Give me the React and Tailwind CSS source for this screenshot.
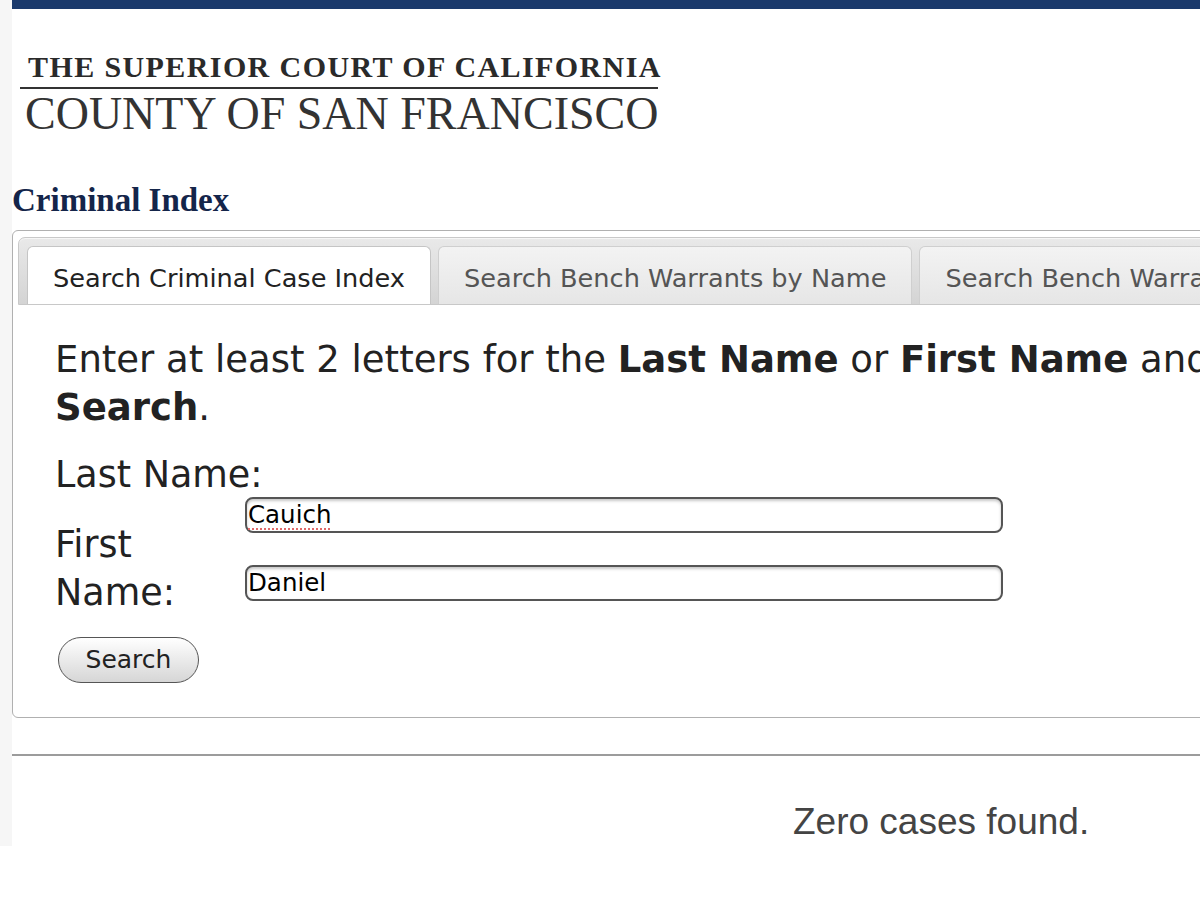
import React from 'react';

// Search tabs across the top of the criminal index panel.
const TABS = [
  { label: 'Search Criminal Case Index', active: true },
  { label: 'Search Bench Warrants by Name', active: false },
  { label: 'Search Bench Warrants by Case Number', active: false },
];

function Tab({ label, active }) {
  return (
    <div
      className={`h-[58px] flex items-center pt-[5px] px-[25px] border border-b-0 rounded-t-[6px] whitespace-nowrap text-[25.6px] shrink-0 ${
        active
          ? 'bg-white border-[#c5c5c5] text-[#222]'
          : 'bg-gradient-to-b from-[#f3f3f3] to-[#e6e6e6] border-[#cfcfcf] text-[#555]'
      }`}
    >
      {label}
    </div>
  );
}

function TextField({ value, misspelled }) {
  return (
    <div className="relative">
      <input
        readOnly
        value={value}
        className="w-[758px] h-[36px] border-2 border-[#555] rounded-[8px] px-[1px] text-[24.5px] text-black bg-white shadow-[inset_0_2px_3px_rgba(0,0,0,0.22)] outline-none font-['DejaVu_Sans',sans-serif]"
      />
      {misspelled && (
        <span className="absolute left-[3px] bottom-[3px] w-[82px] border-b-2 border-dotted border-[#e06a6a] pointer-events-none" />
      )}
    </div>
  );
}

export default function App() {
  return (
    <div className="w-[1200px] h-[906px] overflow-hidden bg-white font-['DejaVu_Sans',sans-serif]">
      <div className="h-[846px] flex">
        <div className="w-[12px] shrink-0 bg-[#f6f6f6]" />
        <div className="w-[1400px] shrink-0 bg-white">
          {/* Top bar */}
          <div className="h-[9px] bg-[#1b3a6c]" />

          {/* Court logo */}
          <div className="ml-[8px] mt-[43px] w-[638px] font-['Liberation_Serif',serif] text-[#2a2a2a]">
            <div className="pl-[8px] text-[30px] leading-none font-bold tracking-[1.4px] whitespace-nowrap">
              THE SUPERIOR COURT OF CALIFORNIA
            </div>
            <div className="mt-[5px] h-[2px] bg-[#333]" />
            <div className="mt-[2px] pl-[5px] text-[46px] leading-none whitespace-nowrap text-[#333]">
              COUNTY OF SAN FRANCISCO
            </div>
          </div>

          {/* Heading */}
          <h1 className="mt-[47px] text-[33px] leading-none font-bold text-[#14254a] font-['Liberation_Serif',serif]">
            Criminal Index
          </h1>

          {/* Search panel */}
          <div className="mt-[13px] border border-[#b0b0b0] rounded-[6px] pt-[6px] px-[5px] pb-[34px]">
            <div className="flex gap-[7px] pl-[8px] pt-[8px] border border-[#c8c8c8] rounded-t-[7px] bg-gradient-to-b from-[#e9e9e9] to-[#d4d4d4] shadow-[inset_0_1px_0_#f6f6f6]">
              {TABS.map(t => (
                <Tab key={t.label} label={t.label} active={t.active} />
              ))}
            </div>

            <div className="pl-[37px] pt-[31px] text-[#222]">
              <p className="w-[1300px] text-[37px] leading-[48px]">
                Enter at least 2 letters for the <b>Last Name</b> or <b>First Name</b> and click{' '}
                <b>Search</b>.
              </p>

              <div className="mt-[19px] flex">
                <div className="w-[190px] text-[36.5px] leading-[48px]">
                  <div className="whitespace-nowrap">Last Name:</div>
                  <div className="mt-[22px]">First Name:</div>
                </div>
                <div className="pt-[46px] flex flex-col gap-[32px]">
                  <TextField value="Cauich" misspelled />
                  <TextField value="Daniel" />
                </div>
              </div>

              <button className="mt-[20px] ml-[3px] w-[141px] h-[46px] rounded-full border-[1.5px] border-[#555] bg-gradient-to-b from-white to-[#d6d6d6] text-[25px] text-[#222]">
                Search
              </button>
            </div>
          </div>

          {/* Results */}
          <div className="mt-[36px] border-t-2 border-[#9c9c9c]">
            <div className="pl-[781px] pt-[47px] text-[37px] leading-none text-[#444] font-['Liberation_Sans',sans-serif]">
              Zero cases found.
            </div>
          </div>
        </div>
      </div>
    </div>
  );
}
